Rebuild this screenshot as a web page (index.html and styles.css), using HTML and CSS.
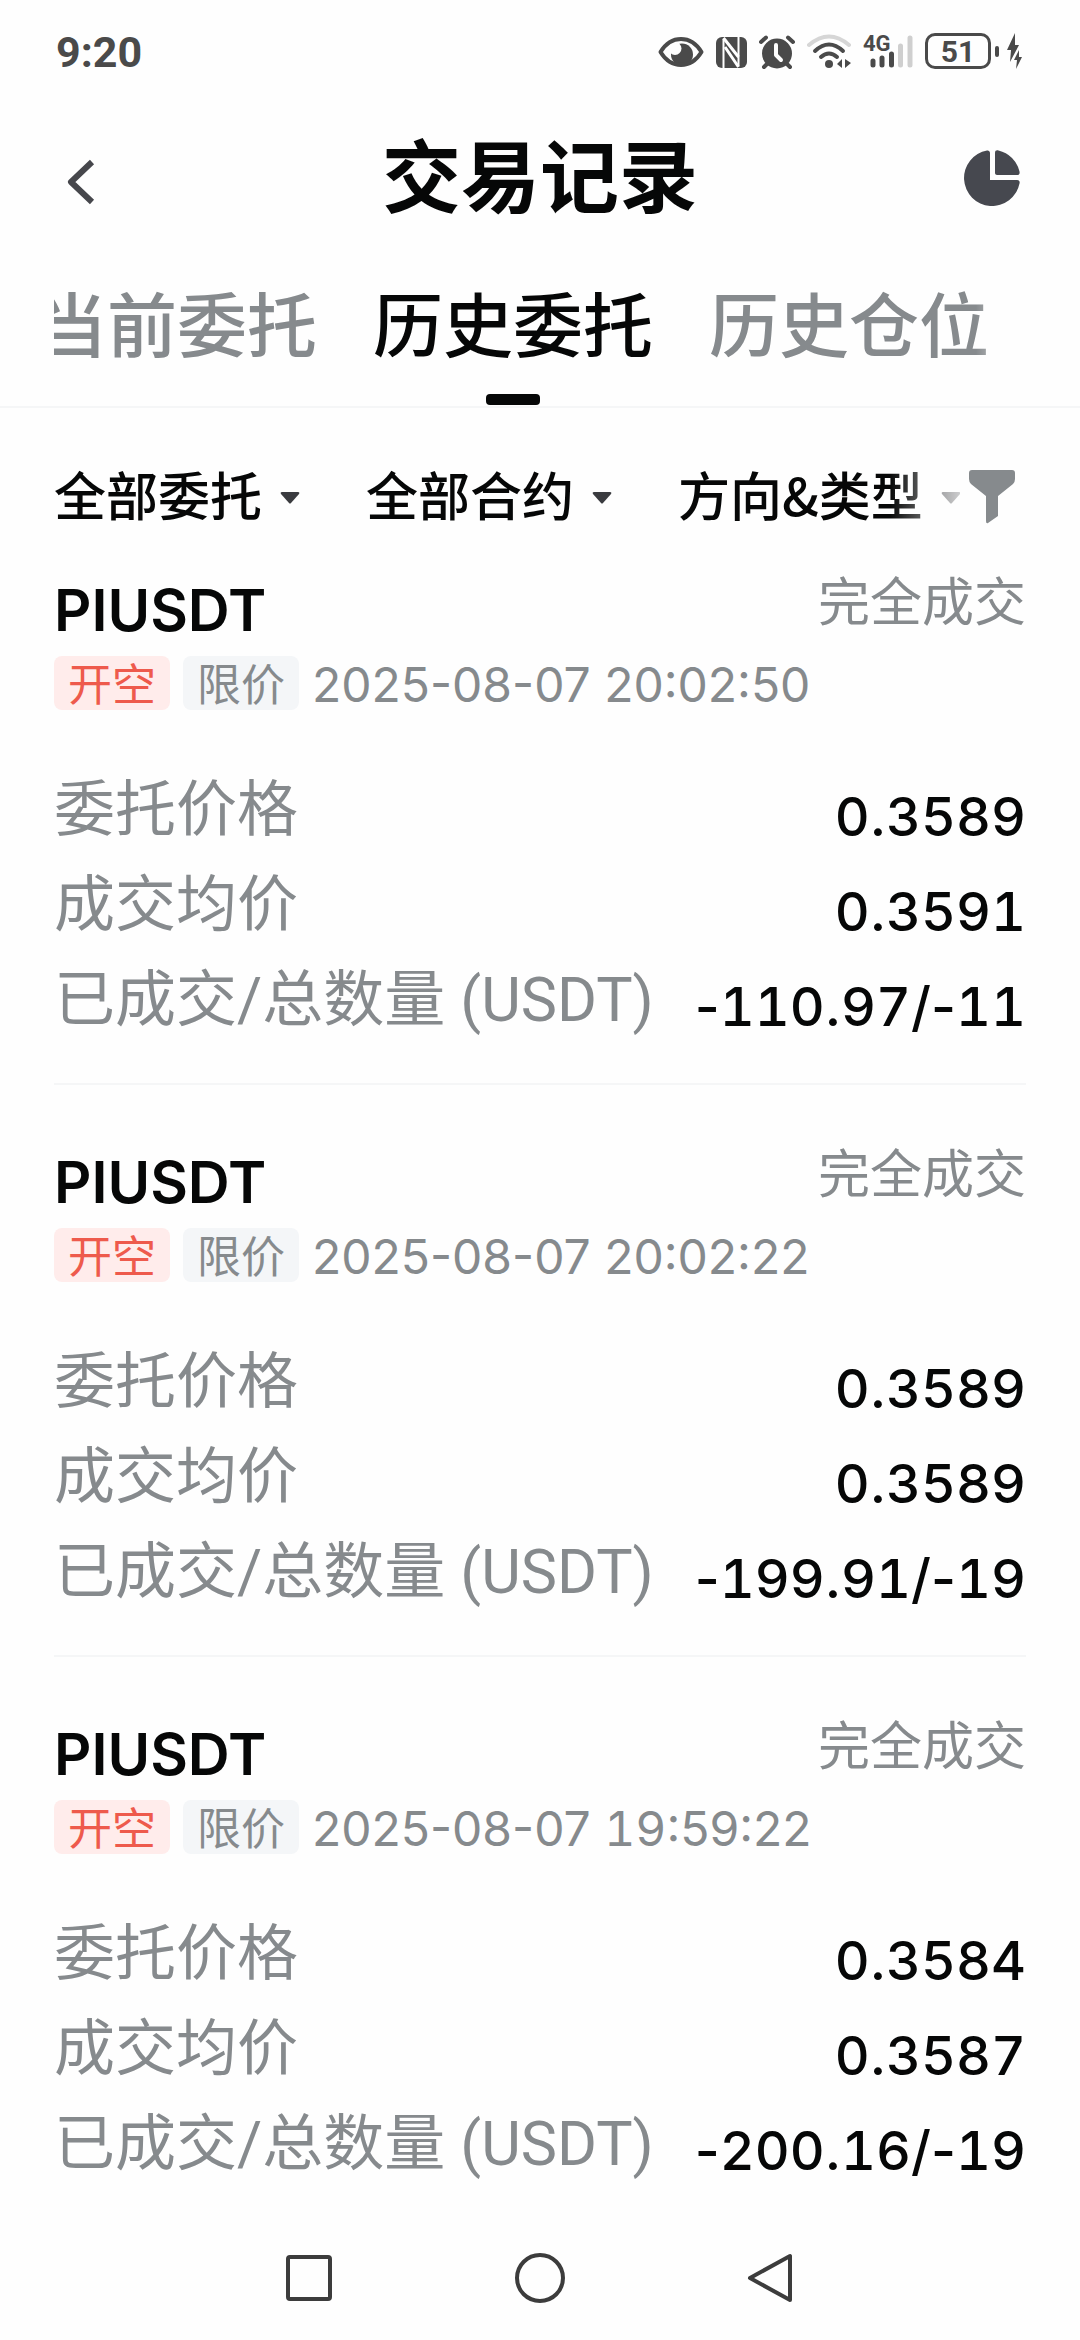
FILE: index.html
```
<!DOCTYPE html>
<html lang="zh-CN">
<head>
<meta charset="utf-8">
<meta name="viewport" content="width=device-width, initial-scale=1">
<title>交易记录</title>
<link rel="stylesheet" href="styles.css">
</head>
<body>
<div class="status-bar">
  <span class="clock">9:20</span>
  <div class="status-icons">
    <svg width="46" height="40" viewBox="0 0 46 40" aria-hidden="true">
      <circle cx="24" cy="23.500" r="11" fill="#4a4a4a"/>
      <circle cx="17" cy="17.500" r="6.500" fill="#fefefe"/>
      <path d="M2.500 21C8 12 15 8 23 8S38 12 43.500 21C38 30 31 34 23 34S8 30 2.500 21Z" fill="none" stroke="#4a4a4a" stroke-width="4" stroke-linejoin="round"/>
    </svg>
    <svg width="31" height="40" viewBox="0 0 31 40" aria-hidden="true">
      <rect y="6" width="31" height="31" rx="6" fill="#4a4a4a"/>
      <path d="M7.500 8V37M22.500 6V35" fill="none" stroke="#fefefe" stroke-width="2"/>
      <path d="M7.500 7L22.500 26M9 16L22.500 36" fill="none" stroke="#fefefe" stroke-width="3"/>
    </svg>
    <svg width="36" height="40" viewBox="0 0 36 40" aria-hidden="true">
      <circle cx="18" cy="22.500" r="15" fill="#4a4a4a"/>
      <path d="M2 11L7 6.500M34 11L29 6.500M5 36L8 33M31 36L28 33" stroke="#4a4a4a" stroke-width="4" stroke-linecap="round"/>
      <path d="M17 14V24L22 29" fill="none" stroke="#fefefe" stroke-width="4" stroke-linecap="round" stroke-linejoin="round"/>
    </svg>
    <svg width="44" height="40" viewBox="0 0 44 40" aria-hidden="true">
      <g fill="none" stroke-linecap="round" stroke-width="4">
        <path d="M2 14Q22-3 42 14" stroke="#d6d6d6"/>
        <path d="M8 20Q22 7 36 20M14 26Q22 19 30 26" stroke="#4a4a4a"/>
      </g>
      <circle cx="22" cy="33" r="4" fill="#4a4a4a"/>
      <path d="M35 28V37L30 33ZM38 28V37L44 32Z" fill="#4a4a4a"/>
    </svg>
    <svg width="50" height="40" viewBox="0 0 50 40" aria-hidden="true">
      <text x="0" y="20" class="net">4G</text>
      <g stroke-width="5" stroke-linecap="round">
        <path d="M10 30V34M19 27V34M28.500 23V34" stroke="#4a4a4a"/>
        <path d="M37.500 15V34M47 7V34" stroke="#cfcfcf"/>
      </g>
    </svg>
    <div class="battery"><span class="battery-level">51</span><span class="battery-tip"></span></div>
    <svg width="15" height="40" viewBox="0 0 15 40" aria-hidden="true">
      <path d="M8 2L0 19H4L3 31L12 14H8Z" fill="#4a4a4a"/>
      <path d="M12 19L7 29H10L9 38L15 26H12Z" fill="#4a4a4a"/>
    </svg>
  </div>
</div>

<header class="header">
  <button class="icon-button" aria-label="返回">
    <svg width="56" height="56" viewBox="0 0 56 56"><path d="M32 12L11 32L32 52" fill="none" stroke="#46474c" stroke-width="6" stroke-linejoin="round"/></svg>
  </button>
  <h1 class="title">交易记录</h1>
  <button class="icon-button" aria-label="统计">
    <svg width="56" height="56" viewBox="0 0 56 56" fill="#46484f">
      <path d="M23 0.500C24.500 0.200 26 1 26 3V30H53C55.500 30 56 32 55.500 33.500A28 28 0 1 1 23 0.500Z"/>
      <path d="M31 3C31 0.500 32.500 0 34.500 0.500A28 28 0 0 1 55.500 21.500C56 24 55 25 53 25H33C32 25 31 24 31 23Z"/>
    </svg>
  </button>
</header>

<nav class="tabs">
  <div class="tab-track">
    <a class="tab" href="#current">当前委托</a>
    <a class="tab tab-active" href="#orders" aria-current="page">历史委托</a>
    <a class="tab" href="#positions">历史仓位</a>
  </div>
</nav>

<div class="filters">
  <div class="filter-track">
    <button class="filter">全部委托<svg class="caret" width="20" height="14" viewBox="0 0 20 14"><path d="M2 1H18Q20 1 19 3L11 12Q10 13 9 12L1 3Q0 1 2 1Z" fill="#3a3b3f"/></svg></button>
    <button class="filter">全部合约<svg class="caret" width="20" height="14" viewBox="0 0 20 14"><path d="M2 1H18Q20 1 19 3L11 12Q10 13 9 12L1 3Q0 1 2 1Z" fill="#3a3b3f"/></svg></button>
    <button class="filter">方向&amp;类型<svg class="caret" width="20" height="14" viewBox="0 0 20 14"><path d="M2 1H18Q20 1 19 3L11 12Q10 13 9 12L1 3Q0 1 2 1Z" fill="#3a3b3f"/></svg></button>
  </div>
  <button class="funnel" aria-label="筛选">
    <svg width="46" height="54" viewBox="0 0 46 54"><path d="M3 0H43Q46 0 46 3V9Q46 12 44 14L29 26V46L19 53Q17 54 17 51V26L2 14Q0 12 0 9V3Q0 0 3 0Z" fill="#868a8d"/></svg>
  </button>
</div>

<main class="orders">
  <article class="order">
    <div class="order-head"><h2 class="symbol">PIUSDT</h2><span class="state">完全成交</span></div>
    <div class="meta"><span class="tag tag-short">开空</span><span class="tag">限价</span><time class="time">2025-08-07 20:02:50</time></div>
    <dl class="rows">
      <div class="row"><dt>委托价格</dt><dd><span class="num">0</span>.<span class="num">3589</span></dd></div>
      <div class="row"><dt>成交均价</dt><dd><span class="num">0</span>.<span class="num">3591</span></dd></div>
      <div class="row"><dt>已成交/总数量 (USDT)</dt><dd>-<span class="num">110</span>.<span class="num">97</span>/-<span class="num">11</span></dd></div>
    </dl>
  </article>
  <article class="order">
    <div class="order-head"><h2 class="symbol">PIUSDT</h2><span class="state">完全成交</span></div>
    <div class="meta"><span class="tag tag-short">开空</span><span class="tag">限价</span><time class="time">2025-08-07 20:02:22</time></div>
    <dl class="rows">
      <div class="row"><dt>委托价格</dt><dd><span class="num">0</span>.<span class="num">3589</span></dd></div>
      <div class="row"><dt>成交均价</dt><dd><span class="num">0</span>.<span class="num">3589</span></dd></div>
      <div class="row"><dt>已成交/总数量 (USDT)</dt><dd>-<span class="num">199</span>.<span class="num">91</span>/-<span class="num">19</span></dd></div>
    </dl>
  </article>
  <article class="order">
    <div class="order-head"><h2 class="symbol">PIUSDT</h2><span class="state">完全成交</span></div>
    <div class="meta"><span class="tag tag-short">开空</span><span class="tag">限价</span><time class="time">2025-08-07 <span class="num">19</span>:59:22</time></div>
    <dl class="rows">
      <div class="row"><dt>委托价格</dt><dd><span class="num">0</span>.<span class="num">3584</span></dd></div>
      <div class="row"><dt>成交均价</dt><dd><span class="num">0</span>.<span class="num">3587</span></dd></div>
      <div class="row"><dt>已成交/总数量 (USDT)</dt><dd>-<span class="num">200</span>.<span class="num">16</span>/-<span class="num">19</span></dd></div>
    </dl>
  </article>
</main>

<footer class="system-nav">
  <button class="nav-button" aria-label="最近任务"><svg width="52" height="52" viewBox="0 0 52 52"><rect x="5" y="5" width="42" height="42" rx="2" fill="none" stroke="#3c3c3c" stroke-width="4"/></svg></button>
  <button class="nav-button" aria-label="主屏幕"><svg width="52" height="52" viewBox="0 0 52 52"><circle cx="26" cy="26" r="23" fill="none" stroke="#3c3c3c" stroke-width="4"/></svg></button>
  <button class="nav-button" aria-label="返回上一页"><svg width="52" height="52" viewBox="0 0 52 52"><path d="M45 4V48L5 26Z" fill="none" stroke="#3c3c3c" stroke-width="4" stroke-linejoin="round"/></svg></button>
</footer>
</body>
</html>
```
FILE: styles.css
```
* {
  box-sizing: border-box;
}

body {
  margin: 0;
  min-height: 100vh;
  display: flex;
  flex-direction: column;
  background: #fefefe;
  color: #060707;
  font-family: Inter, "Noto Sans CJK SC", sans-serif;
}

button {
  padding: 0;
  border: 0;
  background: none;
  color: inherit;
  font: inherit;
}

svg {
  display: block;
  flex: none;
}

h1, h2, dl, dd {
  margin: 0;
}

.status-bar {
  display: flex;
  align-items: center;
  justify-content: space-between;
  height: 104px;
  padding: 0 58px 2px 56px;
  color: #4a4a4a;
  font-family: Roboto, sans-serif;
  font-weight: 700;
}

.clock {
  padding-top: 2px;
  font-size: 43px;
}

.status-icons {
  display: flex;
  align-items: center;
  gap: 12px;
}

.net {
  font-size: 22px;
  fill: #4a4a4a;
}

.battery {
  display: flex;
  align-items: center;
  gap: 4px;
  margin-right: -4px;
}

.battery-level {
  display: flex;
  align-items: center;
  justify-content: center;
  width: 66px;
  height: 36px;
  border: 3px solid #4a4a4a;
  border-radius: 10px;
  font-size: 30px;
}

.battery-tip {
  width: 4px;
  height: 11px;
  border-radius: 2px;
  background: #4a4a4a;
}

.header {
  display: flex;
  align-items: center;
  justify-content: space-between;
  height: 148px;
  padding: 0 60px;
}

.title {
  font-size: 79px;
  line-height: 112px;
  font-weight: 700;
}

.tabs {
  padding: 0 54px;
  border-bottom: 2px solid #f5f6f7;
}

.tab-track {
  display: flex;
  gap: 56px;
  overflow: hidden;
  -webkit-mask-image: linear-gradient(to right, #000 calc(100% - 50px), transparent);
  mask-image: linear-gradient(to right, #000 calc(100% - 50px), transparent);
}

.tab {
  display: flex;
  flex: none;
  flex-direction: column;
  align-items: center;
  height: 154px;
  padding-top: 25px;
  color: #868a8d;
  font-size: 70px;
  line-height: 100px;
  font-weight: 500;
  text-decoration: none;
}

.tab:first-child {
  margin-left: -17px;
}

.tab-active {
  color: #060707;
}

.tab-active::after {
  content: "";
  width: 54px;
  height: 11px;
  margin-top: 17px;
  border-radius: 4px;
  background: #060707;
}

.filters {
  display: flex;
  align-items: center;
  gap: 9px;
  padding: 45px 65px 32px 54px;
}

.filter-track {
  display: flex;
  flex: 1;
  gap: 66px;
  min-width: 0;
  overflow: hidden;
  -webkit-mask-image: linear-gradient(to right, #000 calc(100% - 70px), rgba(0, 0, 0, 0.25));
  mask-image: linear-gradient(to right, #000 calc(100% - 70px), rgba(0, 0, 0, 0.25));
}

.filter {
  display: flex;
  flex: none;
  align-items: center;
  gap: 18px;
  padding-bottom: 6px;
  font-family: "Noto Sans CJK SC", sans-serif;
  font-size: 52px;
  line-height: 82px;
  font-weight: 500;
}

.caret {
  margin-top: 8px;
}

.orders {
  flex: 1;
  padding: 0 54px;
}

.order {
  padding: 60px 0 39px;
  border-bottom: 2px solid #f5f6f7;
}

.order:first-child {
  padding-top: 0;
}

.order:last-child {
  padding-bottom: 0;
  border-bottom: 0;
}

.order-head {
  display: flex;
  justify-content: space-between;
  height: 74px;
}

.symbol {
  font-size: 58px;
  line-height: 74px;
  font-weight: 600;
}

.state {
  padding-top: 4px;
  color: #868a8d;
  font-size: 52px;
  line-height: 52px;
}

.meta {
  display: flex;
  align-items: center;
  gap: 13px;
  margin: 9px 0 49px;
  color: #868a8d;
}

.tag {
  padding: 4px 14px 0;
  border-radius: 8px;
  background: #f4f6f8;
  font-size: 44px;
  line-height: 50px;
}

.tag-short {
  background: #ffeceb;
  color: #ee5a4c;
}

.time {
  padding-top: 4px;
  font-size: 48px;
  line-height: 50px;
}

.row {
  display: flex;
  justify-content: space-between;
  height: 95px;
  white-space: nowrap;
}

dt {
  padding-top: 7px;
  color: #868a8d;
  font-family: Roboto, "Noto Sans CJK SC", sans-serif;
  font-size: 61px;
  line-height: 88px;
}

dd {
  padding-top: 11px;
  font-size: 54px;
  line-height: 94px;
  font-weight: 500;
}

.num {
  font-feature-settings: "tnum";
}

.system-nav {
  display: flex;
  justify-content: center;
  gap: 179px;
  padding: 36px 0;
}
```
